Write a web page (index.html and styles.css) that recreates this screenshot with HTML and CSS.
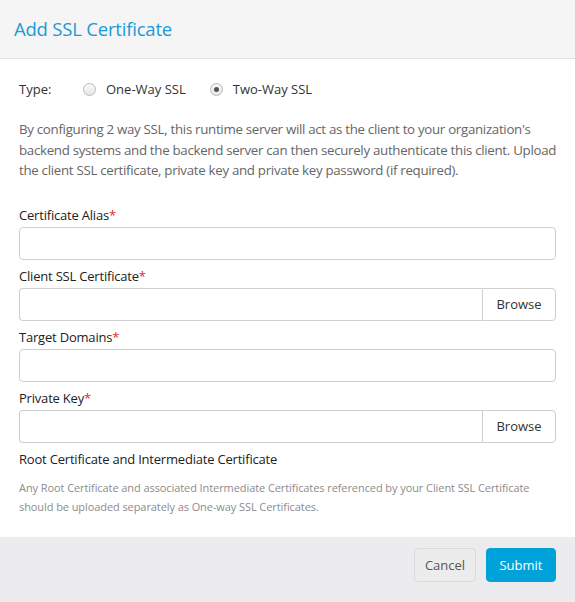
FILE: index.html
```html
<!DOCTYPE html>
<html>
<head>
<meta charset="utf-8">
<link rel="stylesheet" href="styles.css">
</head>
<body>
<div class="dialog">
  <div class="dialog-header">
    <h1 class="dialog-title">Add SSL Certificate</h1>
  </div>
  <div class="dialog-body">
    <div class="type-row">
      <span class="type-label">Type:</span>
      <label class="radio"><span class="radio-dot"></span>One-Way SSL</label>
      <label class="radio"><span class="radio-dot checked"></span>Two-Way SSL</label>
    </div>
    <p class="description">By configuring 2 way SSL, this runtime server will act as the client to your organization's backend systems and the backend server can then securely authenticate this client. Upload the client SSL certificate, private key and private key password (if required).</p>

    <div class="field">
      <div class="field-label">Certificate Alias<span class="req">*</span></div>
      <div class="input"></div>
    </div>
    <div class="field">
      <div class="field-label">Client SSL Certificate<span class="req">*</span></div>
      <div class="input-group"><div class="input grow"></div><div class="browse">Browse</div></div>
    </div>
    <div class="field">
      <div class="field-label">Target Domains<span class="req">*</span></div>
      <div class="input"></div>
    </div>
    <div class="field">
      <div class="field-label">Private Key<span class="req">*</span></div>
      <div class="input-group"><div class="input grow"></div><div class="browse">Browse</div></div>
    </div>
    <div class="root-title">Root Certificate and Intermediate Certificate</div>
    <p class="note">Any Root Certificate and associated Intermediate Certificates referenced by your Client SSL Certificate should be uploaded separately as One-way SSL Certificates.</p>
  </div>
  <div class="dialog-footer">
    <button class="btn btn-cancel">Cancel</button>
    <button class="btn btn-submit">Submit</button>
  </div>
</div>
</body>
</html>
```
FILE: styles.css
```css
* { box-sizing: border-box; }
html, body { margin: 0; padding: 0; background: #fff; }
body { font-family: "Open Sans", "Noto Sans", sans-serif; color: #333; width: 575px; height: 602px; overflow: hidden; }
.dialog { display: flex; flex-direction: column; height: 602px; }
.dialog-header { height: 59px; background: #f5f5f5; border-bottom: 1px solid #e2e2e2; padding: 0 14px 2px; display: flex; align-items: center; }
.dialog-title { margin: 0; font-size: 18.5px; font-weight: 400; color: #1a9ad6; letter-spacing: -0.2px; }
.dialog-body { padding: 20px 19px 0; flex: 1; }
.type-row { display: flex; align-items: center; font-size: 13px; height: 20px; margin-bottom: 20px; }
.type-label { width: 64px; color: #333; }
.radio { display: flex; align-items: center; margin-right: 24px; color: #333; }
.radio-dot { width: 13px; height: 13px; border-radius: 50%; border: 1px solid #b8b8b8; background: linear-gradient(#fafafa, #e6e6e6); margin-right: 10px; position: relative; }
.radio-dot.checked::after { content: ""; position: absolute; left: 3px; top: 3px; width: 5px; height: 5px; border-radius: 50%; background: #555; }
.description { margin: 0 -8px 24px 0; font-size: 13.3px; line-height: 20.5px; color: #666; letter-spacing: -0.3px; }
.field { margin-bottom: 6px; }
.field-label { font-size: 13px; color: #222; line-height: 20px; margin-bottom: 2px; letter-spacing: -0.2px; }
.req { color: #e0252b; }
.input { height: 33px; border: 1px solid #cfcfcf; border-radius: 4px; background: #fff; }
.input-group { display: flex; }
.input.grow { flex: 1; border-radius: 4px 0 0 4px; border-right: none; }
.browse { width: 74px; height: 33px; border: 1px solid #cfcfcf; border-radius: 0 4px 4px 0; display: flex; align-items: center; justify-content: center; font-size: 13px; color: #333; }
.root-title { font-size: 13px; color: #222; margin-top: 4px; line-height: 20px; letter-spacing: -0.2px; }
.note { margin: 9px 0 0; font-size: 11px; line-height: 19px; color: #8c8c8c; letter-spacing: -0.08px; }
.dialog-footer { height: 65px; background: #ececef; display: flex; justify-content: flex-end; align-items: center; padding: 0 19px 9px; gap: 10px; }
.btn { font-family: inherit; font-size: 13px; height: 34px; border-radius: 4px; padding: 0; cursor: pointer; }
.btn-cancel { background: #ececec; border: 1px solid #dadada; color: #555; width: 62px; }
.btn-submit { background: #00a3d9; border: 1px solid #00a3d9; color: #fff; width: 70px; }
```
